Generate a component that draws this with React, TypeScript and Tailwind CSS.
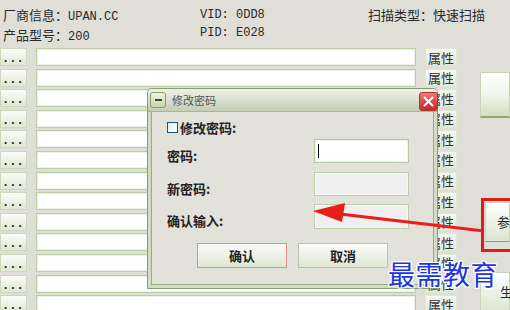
import React from "react";

const cjk = { fontFamily: '"Noto Sans CJK SC", "Noto Sans", sans-serif' };
const mono = { fontFamily: '"Liberation Mono", "Noto Sans CJK SC", monospace' };

function Row({ showLeft = true }: { showLeft?: boolean }) {
  return (
    <div className="flex h-[18px] items-stretch">
      <div
        className="w-[27px] h-[18px] border border-[#cdd8bf] bg-gradient-to-b from-[#fbfcf8] to-[#dfe8d2] flex items-end pb-[0px] pl-[1px] text-[12px] leading-[12px] text-[#222] font-bold tracking-[0px]"
        style={mono}
      >
        ...
      </div>
      <div className="ml-[9px] w-[380px] h-[18px] border border-[#b9cca4] bg-white shadow-[inset_0_0_0_1px_#eef3e8]" />
      <div
        className="ml-[9px] w-[32px] h-[18px] border border-[#dfe6d6] bg-gradient-to-b from-[#f5f7f1] to-[#e3e9da] flex items-center justify-center text-[13px] leading-[13px] text-[#333]"
        style={cjk}
      >
        属性
      </div>
    </div>
  );
}

export default function App() {
  const rows = Array.from({ length: 13 });
  return (
    <div className="relative w-[510px] h-[310px] overflow-hidden bg-[#e0dfd7] text-[#2a2a2a]">
      {/* header */}
      <div className="h-[48px] pt-[6px] pl-[3px] flex text-[13px] leading-[18px]">
        <div className="w-[197px] flex flex-col">
          <div style={cjk}>
            厂商信息：<span className="text-[12px]" style={mono}>UPAN.CC</span>
          </div>
          <div style={cjk}>
            产品型号：<span className="text-[12px]" style={mono}>200</span>
          </div>
        </div>
        <div className="w-[168px] flex flex-col text-[12px]" style={mono}>
          <div>VID: 0DD8</div>
          <div>PID: E028</div>
        </div>
        <div className="flex flex-col" style={cjk}>
          <div>扫描类型：快速扫描</div>
        </div>
      </div>

      {/* main area */}
      <div className="flex">
        <div className="w-[480px] flex flex-col gap-[2.6px]">
          {rows.map((_, i) => (
            <Row key={i} />
          ))}
        </div>
        <div className="w-[30px] flex flex-col">
          <div className="mt-[24px] h-[46px] border border-[#c9d3ba] border-b-[2px] border-b-[#9aa866] bg-gradient-to-b from-[#ffffff] via-[#f1f5ea] to-[#d2dfc2]" />
          <div className="mt-[84px] h-[40px] ml-[5px] border border-[#c9d3ba] border-b-[#8e9a78] bg-gradient-to-b from-[#ffffff] to-[#dbe5cf] flex items-center pl-[11px] text-[13px]" style={cjk}>
            参
          </div>
          <div className="mt-[30px] h-[40px] border border-[#c9d3ba] bg-gradient-to-b from-[#ffffff] to-[#dbe5cf] flex items-center pl-[19px] text-[13px]" style={cjk}>
            生
          </div>
        </div>
      </div>

      {/* red annotation box */}
      <div className="absolute left-[481px] top-[198px] w-[40px] h-[54px] border-[3px] border-[#e81818]" />

      {/* dialog */}
      <div className="absolute left-[147px] top-[88px] w-[291px] h-[201px] flex flex-col border border-[#889e70] rounded-t-[5px] bg-[#d2dbc3]">
        <div className="relative h-[23px] flex items-center rounded-t-[4px] bg-gradient-to-b from-[#eef0e7] via-[#dadfd0] to-[#c3ccb3] border-b border-[#a9b894]">
          <div className="ml-[2px] w-[16px] h-[16px] rounded-[3px] border border-[#86a064] bg-gradient-to-b from-[#eef5e2] to-[#c5d6ad] flex items-center justify-center">
            <div className="w-[7px] h-[2px] bg-[#3d4a30]" />
          </div>
          <div className="ml-[6px] text-[11px] leading-[12px] text-[#555]" style={cjk}>
            修改密码
          </div>
          <div className="absolute right-[-1px] top-[3px] w-[19px] h-[19px] rounded-[3px] border border-[#b23636] bg-gradient-to-b from-[#f07a7a] via-[#df4848] to-[#c42a2a] flex items-center justify-center">
            <svg width="11" height="11" viewBox="0 0 11 11">
              <path d="M1.5 1.5 L9.5 9.5 M9.5 1.5 L1.5 9.5" stroke="#ffffff" strokeWidth="2" strokeLinecap="round" />
            </svg>
          </div>
        </div>
        <div className="flex-1 mx-[3px] mb-[3px] border border-[#98ab84] border-t-0 bg-[#e2e1da] pl-[15px] pt-[10px] flex flex-col text-[13px] font-bold text-[#222]" style={cjk}>
          <div className="flex items-center h-[11px]">
            <div className="w-[11px] h-[11px] border border-[#1c5180] bg-gradient-to-br from-[#e8e8e0] to-[#ffffff]" />
            <span className="ml-[2px] leading-[13px]">修改密码:</span>
          </div>
          <div className="mt-[6px] flex items-center h-[24px]">
            <span className="w-[147px] mt-[8px] leading-[13px]">密码:</span>
            <div className="w-[95px] h-[24px] border border-[#b6c8a2] bg-white shadow-[inset_0_0_0_1px_#eef2e8] relative">
              <div className="absolute left-[3px] top-[4px] w-[1px] h-[14px] bg-black" />
            </div>
          </div>
          <div className="mt-[9px] flex items-center h-[24px]">
            <span className="w-[147px] mt-[8px] leading-[13px]">新密码:</span>
            <div className="w-[95px] h-[24px] border border-[#bccdaa] bg-[#efefef] shadow-[inset_0_0_0_1px_#f7f7f4]" />
          </div>
          <div className="mt-[8px] flex items-center h-[25px]">
            <span className="w-[147px] mt-[8px] leading-[13px]">确认输入:</span>
            <div className="w-[95px] h-[25px] border border-[#bccdaa] bg-[#efefef] shadow-[inset_0_0_0_1px_#f7f7f4]" />
          </div>
          <div className="mt-[14px] flex h-[25px]">
            <div className="ml-[30px] w-[90px] h-[25px] border border-[#e08c8c] bg-gradient-to-b from-[#fbfbf8] to-[#dfe7d3] flex items-center justify-center leading-[13px]">
              确认
            </div>
            <div className="ml-[11px] w-[90px] h-[25px] border border-[#b7c7a6] bg-gradient-to-b from-[#fbfbf8] to-[#dfe7d3] flex items-center justify-center leading-[13px]">
              取消
            </div>
          </div>
        </div>
      </div>

      {/* red arrow */}
      <svg className="absolute left-0 top-0 pointer-events-none" width="510" height="310" viewBox="0 0 510 310">
        <line x1="340" y1="214" x2="484" y2="231" stroke="#ec1c1c" strokeWidth="3" />
        <polygon points="313,211 345,203 342,222" fill="#ec1c1c" />
      </svg>

      {/* watermark */}
      <div
        className="absolute left-[388px] top-[258px] text-[27px] leading-[32px] text-[#1c34e0] tracking-[0.5px]"
        style={{
          ...cjk,
          textShadow:
            "1px 0 #fff, -1px 0 #fff, 0 1px #fff, 0 -1px #fff, 1px 1px #fff, -1px -1px #fff, 1px -1px #fff, -1px 1px #fff",
        }}
      >
        最需教育
      </div>
    </div>
  );
}
